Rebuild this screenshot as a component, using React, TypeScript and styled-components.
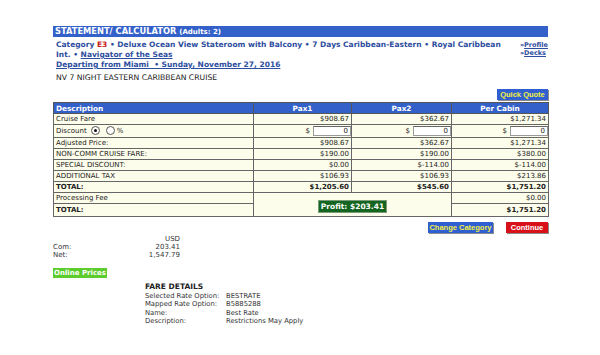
import React from 'react';
import styled, { createGlobalStyle } from 'styled-components';

const GlobalStyle = createGlobalStyle`
  body {
    margin: 0;
    background: #fff;
    font-family: "DejaVu Sans", Verdana, sans-serif;
    font-size: 7px;
    color: #222;
  }
`;

const Page = styled.div`
  width: 495px;
  margin: 26px 0 0 53px;
`;

const TitleBar = styled.div`
  background: #3461c9;
  color: #fff;
  font-weight: bold;
  font-size: 8.3px;
  height: 11px;
  line-height: 11px;
  padding-left: 2px;
  small {
    font-size: 7px;
  }
`;

const InfoRow = styled.div`
  display: flex;
  justify-content: space-between;
  padding: 3px 0 0 3px;
`;

const InfoText = styled.div`
  width: 450px;
  color: #2d4d9e;
  font-weight: bold;
  font-size: 7.5px;
  line-height: 10px;
`;

const Red = styled.span`
  color: #c62020;
`;

const Link = styled.span`
  text-decoration: underline;
`;

const SideLinks = styled.div`
  display: flex;
  flex-direction: column;
  font-size: 6.5px;
  font-weight: bold;
  color: #2d4d9e;
  line-height: 8px;
  padding-top: 1px;
  span {
    text-decoration: underline;
  }
`;

const CruiseName = styled.div`
  padding: 3px 0 0 3px;
  font-size: 7.7px;
  color: #222;
`;

const ButtonRow = styled.div<{ $top: number }>`
  display: flex;
  justify-content: flex-end;
  gap: 13px;
  margin-top: ${p => p.$top}px;
`;

const Button = styled.div<{ $bg: string; $fg: string; $w: number }>`
  width: ${p => p.$w}px;
  height: 11px;
  line-height: 11px;
  text-align: center;
  background: ${p => p.$bg};
  color: ${p => p.$fg};
  font-family: "Liberation Sans", Arial, sans-serif;
  font-weight: bold;
  font-size: 7.5px;
  box-shadow: 1px 1px 0 #8a8a8a;
`;

const Table = styled.table`
  width: 495px;
  margin-top: 2px;
  border-collapse: collapse;
  background: #fdfdeb;
  table-layout: fixed;
  font-size: 7px;
  th {
    background: #3461c9;
    color: #fff;
    font-weight: bold;
    font-size: 7.3px;
    height: 10px;
    padding: 0 2px;
    border: 1px solid #555;
    text-align: center;
  }
  th:first-child {
    text-align: left;
  }
  td {
    padding: 0 2px;
    border: 1px solid #666;
    text-align: right;
    line-height: 9px;
  }
  td:first-child {
    text-align: left;
  }
`;

const Row = styled.tr<{ $bold?: boolean; $tall?: boolean }>`
  font-weight: ${p => (p.$bold ? 'bold' : 'normal')};
  td {
    height: ${p => (p.$tall ? 12 : 10)}px;
  }
`;

const Radio = styled.span<{ $on?: boolean }>`
  display: inline-block;
  width: 7px;
  height: 7px;
  border-radius: 50%;
  border: 1px solid #555;
  background: #fff;
  vertical-align: middle;
  margin: -1px 2px 0 4px;
  position: relative;
  &::after {
    content: '';
    display: ${p => (p.$on ? 'block' : 'none')};
    position: absolute;
    left: 2px;
    top: 2px;
    width: 3px;
    height: 3px;
    border-radius: 50%;
    background: #111;
  }
`;

const Amount = styled.div`
  display: flex;
  align-items: center;
  justify-content: flex-end;
  gap: 3px;
`;

const AmountBox = styled.span`
  width: 34px;
  height: 8px;
  line-height: 8px;
  border: 1px solid #999;
  border-top-color: #666;
  background: #fff;
  text-align: right;
  padding-right: 2px;
  margin-right: -2px;
`;

const ProfitCell = styled.td`
  && {
    text-align: center;
    vertical-align: middle;
    padding-top: 3px;
  }
`;

const Profit = styled.span`
  display: inline-block;
  background: #13651f;
  color: #fff;
  font-weight: bold;
  font-size: 7.5px;
  padding: 1px 2px;
  line-height: 9px;
  border: 1px solid #7c9a7c;
`;

const Summary = styled.div`
  display: grid;
  grid-template-columns: 30px 97px;
  font-size: 7px;
  line-height: 8px;
  margin-top: 2px;
  color: #333;
  span:nth-child(even) {
    text-align: right;
  }
`;

const OnlinePrices = styled.div`
  display: inline-block;
  margin-top: 9px;
  background: #5ccc2e;
  color: #fff;
  font-weight: bold;
  font-size: 7px;
  padding: 0 1px;
  line-height: 10px;
`;

const FareDetails = styled.div`
  margin: 5px 0 0 92px;
  display: grid;
  grid-template-columns: 81px auto;
  font-size: 6.8px;
  line-height: 8.5px;
  color: #333;
  white-space: nowrap;
`;

const FareTitle = styled.div`
  grid-column: 1 / 3;
  font-weight: bold;
  font-size: 7.5px;
  color: #222;
`;

const rows = [
  { label: 'Adjusted Price:', v: ['$908.67', '$362.67', '$1,271.34'] },
  { label: 'NON-COMM CRUISE FARE:', v: ['$190.00', '$190.00', '$380.00'] },
  { label: 'SPECIAL DISCOUNT:', v: ['$0.00', '$-114.00', '$-114.00'] },
  { label: 'ADDITIONAL TAX', v: ['$106.93', '$106.93', '$213.86'] },
];

const fare = [
  ['Selected Rate Option:', 'BESTRATE'],
  ['Mapped Rate Option:', 'B5885288'],
  ['Name:', 'Best Rate'],
  ['Description:', 'Restrictions May Apply'],
];

export default function App() {
  return (
    <Page>
      <GlobalStyle />
      <TitleBar>
        STATEMENT/ CALCULATOR <small>(Adults: 2)</small>
      </TitleBar>
      <InfoRow>
        <InfoText>
          Category <Red>E3</Red> • Deluxe Ocean View Stateroom with Balcony • 7 Days Caribbean-Eastern • Royal Caribbean Int. •{' '}
          <Link>Navigator of the Seas</Link>
          <br />
          <Link>Departing from Miami&nbsp; • Sunday, November 27, 2016</Link>
        </InfoText>
        <SideLinks>
          <div>»<span>Profile</span></div>
          <div>»<span>Decks</span></div>
        </SideLinks>
      </InfoRow>
      <CruiseName>NV 7 NIGHT EASTERN CARIBBEAN CRUISE</CruiseName>
      <ButtonRow $top={7}>
        <Button $bg="#2f5fd0" $fg="#f4f040" $w={51}>Quick Quote</Button>
      </ButtonRow>
      <Table>
        <colgroup>
          <col style={{ width: 200 }} />
          <col style={{ width: 98 }} />
          <col style={{ width: 100 }} />
          <col style={{ width: 97 }} />
        </colgroup>
        <thead>
          <tr>
            <th>Description</th>
            <th>Pax1</th>
            <th>Pax2</th>
            <th>Per Cabin</th>
          </tr>
        </thead>
        <tbody>
          <Row>
            <td>Cruise Fare</td>
            <td>$908.67</td>
            <td>$362.67</td>
            <td>$1,271.34</td>
          </Row>
          <Row $tall>
            <td>
              Discount<Radio $on />
              <Radio />%
            </td>
            {[0, 1, 2].map(i => (
              <td key={i}>
                <Amount>
                  <span>$</span>
                  <AmountBox>0</AmountBox>
                </Amount>
              </td>
            ))}
          </Row>
          {rows.map(r => (
            <Row key={r.label}>
              <td>{r.label}</td>
              {r.v.map((x, i) => (
                <td key={i}>{x}</td>
              ))}
            </Row>
          ))}
          <Row $bold>
            <td>TOTAL:</td>
            <td>$1,205.60</td>
            <td>$545.60</td>
            <td>$1,751.20</td>
          </Row>
          <Row>
            <td>Processing Fee</td>
            <ProfitCell colSpan={2} rowSpan={2}>
              <Profit>Profit: $203.41</Profit>
            </ProfitCell>
            <td>$0.00</td>
          </Row>
          <Row $bold $tall>
            <td>TOTAL:</td>
            <td>$1,751.20</td>
          </Row>
        </tbody>
      </Table>
      <ButtonRow $top={5}>
        <Button $bg="#2f5fd0" $fg="#f4f040" $w={65}>Change Category</Button>
        <Button $bg="#d8101a" $fg="#fff" $w={42}>Continue</Button>
      </ButtonRow>
      <Summary>
        <span />
        <span>USD</span>
        <span>Com:</span>
        <span>203.41</span>
        <span>Net:</span>
        <span>1,547.79</span>
      </Summary>
      <OnlinePrices>Online Prices</OnlinePrices>
      <FareDetails>
        <FareTitle>FARE DETAILS</FareTitle>
        {fare.map(([k, v]) => (
          <React.Fragment key={k}>
            <span>{k}</span>
            <span>{v}</span>
          </React.Fragment>
        ))}
      </FareDetails>
    </Page>
  );
}
